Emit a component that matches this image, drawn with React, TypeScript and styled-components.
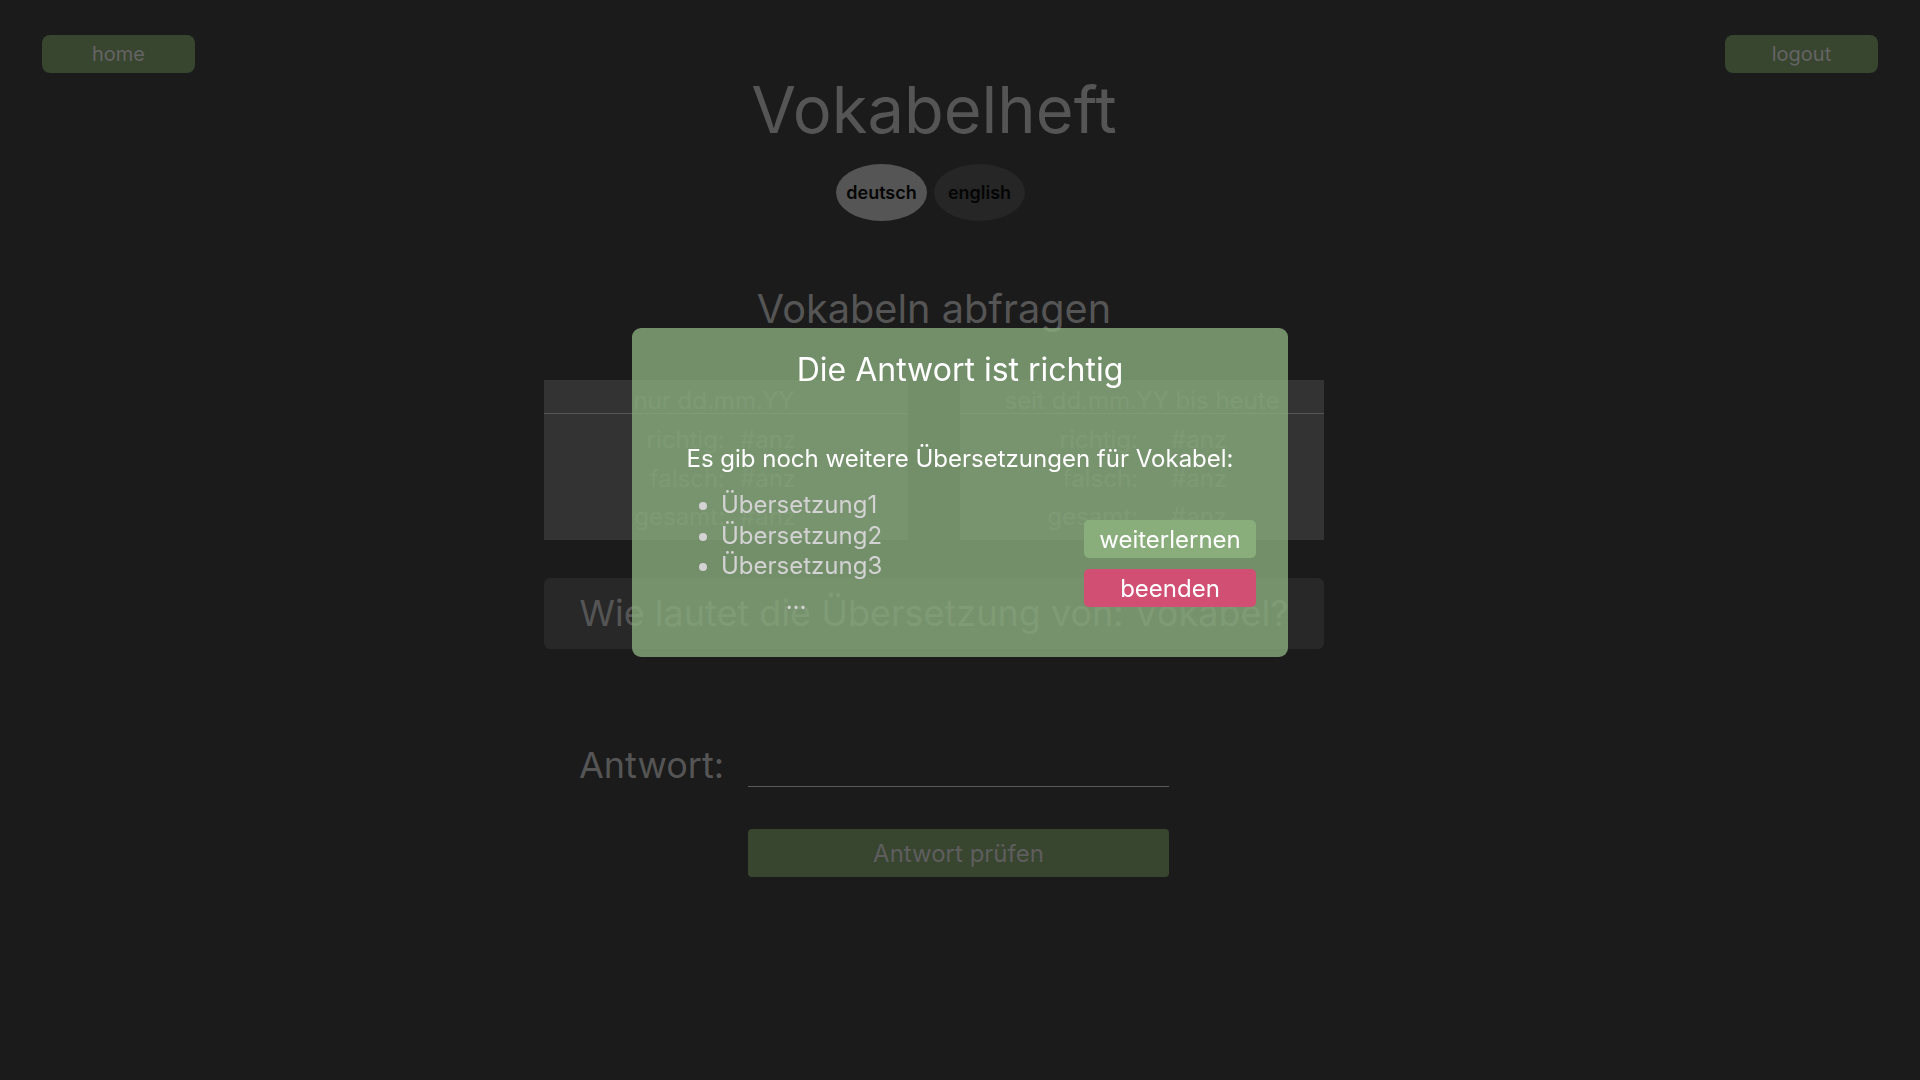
import React from "react";
import styled, { createGlobalStyle } from "styled-components";

const GlobalStyle = createGlobalStyle`
  html, body {
    margin: 0;
    padding: 0;
    background: #1b1b1b;
    font-family: Inter, "Noto Sans", "Liberation Sans", sans-serif;
  }
  * { box-sizing: border-box; }
`;

const Page = styled.div`
  min-height: 100vh;
  background: #1b1b1b;
`;

const Header = styled.header`
  display: grid;
  grid-template-columns: 153px 1fr 153px;
  align-items: start;
  padding: 35px 42px 0;
`;

const NavButton = styled.button`
  width: 153px;
  height: 38px;
  border: none;
  border-radius: 8px;
  background: #38452f;
  color: #646464;
  font-family: inherit;
  font-size: 20px;
  padding: 0;
`;

const Brand = styled.div`
  display: flex;
  flex-direction: column;
  align-items: center;
  padding-right: 52px;
`;

const Title = styled.h1`
  margin: 35px 0 0;
  font-size: 65px;
  font-weight: 400;
  line-height: 79px;
  color: #555555;
`;

const LangRow = styled.div`
  display: flex;
  gap: 7px;
  margin-top: 15px;
  margin-right: 7px;
`;

const LangPill = styled.button<{ $active?: boolean }>`
  width: 91px;
  height: 57px;
  border: none;
  border-radius: 50%;
  padding: 0;
  background: ${(p) => (p.$active ? "#555555" : "#262626")};
  color: #050505;
  font-family: inherit;
  font-size: 18px;
  font-weight: 600;
`;

const Main = styled.main`
  width: 832px;
  margin: 0 auto;
  padding-right: 52px;
`;

const SectionTitle = styled.h2`
  margin: 64px 0 0;
  text-align: center;
  font-size: 39.7px;
  font-weight: 400;
  line-height: 48px;
  color: #555555;
`;

const Stats = styled.div`
  display: grid;
  grid-template-columns: 1fr 1fr;
  gap: 52px;
  margin-top: 47px;
`;

const Panel = styled.section`
  height: 160px;
  background: #333333;
`;

const PanelHeader = styled.div<{ $shift: number }>`
  height: 34px;
  display: flex;
  align-items: flex-end;
  justify-content: center;
  padding-right: ${(p) => p.$shift}px;
  border-bottom: 1px solid #555555;
  font-size: 24px;
  line-height: 24px;
  color: #4f4f4f;
`;

const StatRows = styled.div`
  padding-top: 7px;
`;

const StatRow = styled.div<{ $labelGap: number; $valueGap: number }>`
  display: grid;
  grid-template-columns: 1fr 1fr;
  font-size: 24px;
  line-height: 38.5px;
  color: #4f4f4f;

  & > span:first-child {
    text-align: right;
    padding-right: ${(p) => p.$labelGap}px;
  }
  & > span:last-child {
    padding-left: ${(p) => p.$valueGap}px;
  }
`;

const QuestionBox = styled.div`
  margin-top: 38px;
  padding: 14px;
  background: #282828;
  border-radius: 6px;
  text-align: center;
  font-size: 36px;
  line-height: 43px;
  color: #555555;
`;

const AnswerForm = styled.form`
  display: grid;
  grid-template-columns: 169px 421px;
  row-gap: 42px;
  margin-top: 94px;
  padding-left: 35px;
`;

const AnswerLabel = styled.label`
  font-size: 36px;
  line-height: 44px;
  color: #555555;
`;

const AnswerInput = styled.input`
  align-self: end;
  width: 421px;
  height: 40px;
  border: none;
  border-bottom: 1px solid #5a5a5a;
  background: transparent;
  outline: none;
  font-family: inherit;
  font-size: 24px;
  color: #888;
`;

const SubmitButton = styled.button`
  grid-column: 2;
  height: 48px;
  border: none;
  border-radius: 4px;
  background: #38452f;
  color: #5e5e5e;
  font-family: inherit;
  font-size: 24px;
`;

const Modal = styled.div`
  position: fixed;
  top: 328px;
  left: 50%;
  transform: translateX(-50%);
  width: 656px;
  height: 329px;
  padding-top: 22px;
  background: rgba(137, 173, 126, 0.8);
  border-radius: 9px;
  color: #ffffff;
`;

const ModalTitle = styled.h3`
  margin: 0;
  text-align: center;
  font-size: 32px;
  font-weight: 400;
  line-height: 39px;
`;

const ModalMessage = styled.p`
  margin: 55px 0 0;
  text-align: center;
  font-size: 24px;
  line-height: 29px;
`;

const ModalBody = styled.div`
  display: flex;
  justify-content: space-between;
  align-items: flex-start;
  margin-top: 17px;
  padding: 0 32px 0 55px;
`;

const Alternatives = styled.div`
  width: 218px;
  color: #d3d3d3;
`;

const AltList = styled.ul`
  margin: 0;
  padding-left: 34px;
  font-size: 24px;
  line-height: 30.5px;
`;

const More = styled.p`
  margin: 4px 0 0;
  text-align: center;
  font-size: 24px;
  line-height: 29px;
`;

const Actions = styled.div`
  display: flex;
  flex-direction: column;
  gap: 11px;
  margin-top: 30px;
`;

const ActionButton = styled.button<{ $tone: "go" | "stop" }>`
  width: 172px;
  height: 38px;
  border: none;
  border-radius: 5px;
  padding: 0;
  background: ${(p) => (p.$tone === "go" ? "#8aad7c" : "#d14f73")};
  color: #ffffff;
  font-family: inherit;
  font-size: 24px;
`;

const panels = [
  { header: "nur dd.mm.YY", shift: 24, labelGap: 1, valueGap: 14 },
  { header: "seit dd.mm.YY bis heute", shift: 0, labelGap: 4, valueGap: 29 },
];

const rows = ["richtig:", "falsch:", "gesamt:"];

export default function App() {
  return (
    <Page>
      <GlobalStyle />
      <Header>
        <NavButton>home</NavButton>
        <Brand>
          <Title>Vokabelheft</Title>
          <LangRow>
            <LangPill $active>deutsch</LangPill>
            <LangPill>english</LangPill>
          </LangRow>
        </Brand>
        <NavButton>logout</NavButton>
      </Header>

      <Main>
        <SectionTitle>Vokabeln abfragen</SectionTitle>
        <Stats>
          {panels.map((p) => (
            <Panel key={p.header}>
              <PanelHeader $shift={p.shift}>{p.header}</PanelHeader>
              <StatRows>
                {rows.map((r) => (
                  <StatRow key={r} $labelGap={p.labelGap} $valueGap={p.valueGap}>
                    <span>{r}</span>
                    <span>#anz</span>
                  </StatRow>
                ))}
              </StatRows>
            </Panel>
          ))}
        </Stats>
        <QuestionBox>Wie lautet die Übersetzung von: Vokabel?</QuestionBox>
        <AnswerForm onSubmit={(e) => e.preventDefault()}>
          <AnswerLabel htmlFor="answer">Antwort:</AnswerLabel>
          <AnswerInput id="answer" type="text" />
          <SubmitButton type="submit">Antwort prüfen</SubmitButton>
        </AnswerForm>
      </Main>

      <Modal role="dialog">
        <ModalTitle>Die Antwort ist richtig</ModalTitle>
        <ModalMessage>Es gib noch weitere Übersetzungen für Vokabel:</ModalMessage>
        <ModalBody>
          <Alternatives>
            <AltList>
              <li>Übersetzung1</li>
              <li>Übersetzung2</li>
              <li>Übersetzung3</li>
            </AltList>
            <More>...</More>
          </Alternatives>
          <Actions>
            <ActionButton $tone="go">weiterlernen</ActionButton>
            <ActionButton $tone="stop">beenden</ActionButton>
          </Actions>
        </ModalBody>
      </Modal>
    </Page>
  );
}
